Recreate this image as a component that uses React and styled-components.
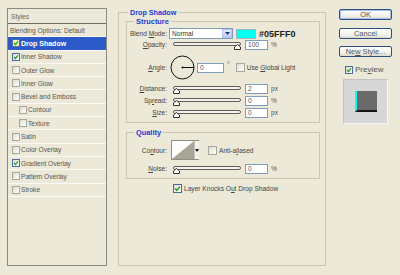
import React from 'react';
import styled, { createGlobalStyle } from 'styled-components';

const GlobalStyle = createGlobalStyle`
  html, body {
    margin: 0;
    padding: 0;
    background: #ece9d8;
  }
  body {
    font-family: "Liberation Sans", Arial, sans-serif;
    font-size: 6.6px;
    color: #333;
  }
`;

const Dialog = styled.div`
  width: 400px;
  height: 275px;
  box-sizing: border-box;
  padding: 8px 0 0 7px;
  display: flex;
  align-items: flex-start;
  background: #ece9d8;
  overflow: hidden;
`;

/* ---------- styles list ---------- */

const StylesPanel = styled.div`
  width: 100px;
  height: 258px;
  box-sizing: border-box;
  border: 1px solid #8d8b7f;
  display: flex;
  flex-direction: column;
`;

const PanelHeader = styled.div`
  height: 15px;
  box-sizing: border-box;
  padding-left: 3px;
  display: flex;
  align-items: center;
  color: #666;
  border-bottom: 1px solid #6f6d62;
`;

const StyleRow = styled.div`
  height: 13.3px;
  box-sizing: border-box;
  display: flex;
  align-items: center;
  padding-left: ${(p) => (p.$plain ? 2 : p.$indent ? 11 : 4)}px;
  border-bottom: 1px solid #fbfaf5;
  background: ${(p) => (p.$selected ? '#2c5bc9' : 'transparent')};
  color: ${(p) => (p.$selected ? '#fff' : '#555')};
  font-weight: ${(p) => (p.$selected ? 'bold' : 'normal')};
  font-size: ${(p) => (p.$selected ? '7px' : '6.6px')};
  white-space: nowrap;
`;

/* ---------- checkbox ---------- */

const Box = styled.span`
  flex: none;
  width: ${(p) => p.$size}px;
  height: ${(p) => p.$size}px;
  box-sizing: border-box;
  border: 1px solid ${(p) => (p.$checked ? '#4b6c9c' : '#a9a799')};
  background: ${(p) =>
    p.$hot ? '#f6efb4' : 'linear-gradient(135deg, #dedcd2, #ffffff)'};
  margin-right: ${(p) => p.$gap}px;
  display: flex;
  align-items: center;
  justify-content: center;
`;

function CheckBox({ checked, size = 8, gap = 1, hot }) {
  return (
    <Box $checked={checked} $size={size} $gap={gap} $hot={hot}>
      {checked && (
        <svg width={size - 2} height={size - 2} viewBox="0 0 6 6">
          <polyline points="1,3 2.4,4.6 5,1.4" fill="none" stroke="#21a121" strokeWidth="1.3" />
        </svg>
      )}
    </Box>
  );
}

/* ---------- group boxes ---------- */

const Group = styled.fieldset`
  margin: ${(p) => p.$mt || 0}px 0 0 ${(p) => p.$ml || 0}px;
  min-width: 0;
  border: 1px solid #c9c6b4;
  padding: ${(p) => p.$pad};
  height: ${(p) => (p.$h ? `${p.$h}px` : 'auto')};
  width: ${(p) => (p.$w ? `${p.$w}px` : 'auto')};
  box-sizing: border-box;
  display: flex;
  flex-direction: column;
`;

const Legend = styled.legend`
  margin-left: ${(p) => p.$ml}px;
  padding: 0 2px;
  line-height: 9px;
  font-weight: bold;
  font-size: ${(p) => p.$size}px;
  color: #1b3bd6;
`;

const FieldRow = styled.div`
  height: ${(p) => p.$h}px;
  margin-top: ${(p) => p.$mt}px;
  display: flex;
  align-items: center;
`;

const Label = styled.span`
  width: 40px;
  flex: none;
  text-align: right;
  margin-right: 2px;
  color: #444;
  white-space: nowrap;
`;

const U = styled.span`
  text-decoration: underline;
`;

const Select = styled.div`
  width: 64px;
  height: 11px;
  box-sizing: border-box;
  border: 1px solid #7f9db9;
  background: #fff;
  display: flex;
  align-items: center;
  justify-content: space-between;
  padding-left: 2px;
  color: #333;
`;

const SelectArrow = styled.span`
  width: 10px;
  height: 9px;
  box-sizing: border-box;
  border: 1px solid #b2c4ee;
  background: linear-gradient(#e3ebfd, #bccdf6);
  display: flex;
  align-items: center;
  justify-content: center;
`;

const Swatch = styled.span`
  width: 20px;
  height: 10px;
  margin-left: 3px;
  background: #05fff0;
  border: 1px solid #9bb;
  box-sizing: border-box;
`;

const HexText = styled.span`
  margin-left: 3px;
  font-size: 9px;
  font-weight: bold;
  color: #222;
`;

const SliderWrap = styled.div`
  position: relative;
  width: 68px;
  height: 11px;
  margin-left: ${(p) => p.$ml}px;
  flex: none;
`;

const Track = styled.div`
  margin-top: 3px;
  height: 4px;
  box-sizing: border-box;
  border: 1px solid #5e5d57;
  border-radius: 2px;
  background: #f1f0ea;
`;

const Thumb = styled.svg`
  position: absolute;
  top: 5px;
`;

function Slider({ value, max, ml = 4 }) {
  const left = Math.round((value / max) * 61);
  return (
    <SliderWrap $ml={ml}>
      <Track />
      <Thumb width="7" height="6" viewBox="0 0 7 6" style={{ left }}>
        <polygon points="3.5,0.5 6.5,3 6.5,5.5 0.5,5.5 0.5,3" fill="#fff" stroke="#333" strokeWidth="1" />
      </Thumb>
    </SliderWrap>
  );
}

const NumInput = styled.span`
  width: ${(p) => p.$w}px;
  height: 10px;
  box-sizing: border-box;
  margin-left: ${(p) => p.$ml}px;
  border: 1px solid #7f9db9;
  background: #fff;
  padding-left: 2px;
  display: flex;
  align-items: center;
  color: #555;
  flex: none;
`;

const Unit = styled.span`
  margin-left: 3px;
  color: #555;
  align-self: ${(p) => (p.$top ? 'flex-start' : 'center')};
  margin-top: ${(p) => (p.$top ? '6px' : '0')};
`;

const InlineCheck = styled.label`
  display: flex;
  align-items: center;
  margin-left: ${(p) => p.$ml}px;
  color: #444;
  white-space: nowrap;
`;

const AngleDial = styled.svg`
  margin-left: 1px;
  flex: none;
`;

const ContourBox = styled.div`
  margin-left: 2px;
  width: 28px;
  height: 20px;
  box-sizing: border-box;
  border: 1px solid #8f8d80;
  display: flex;
  background: #fff;
`;

const ContourPick = styled.span`
  flex: 1;
  border-right: 1px solid #c8c6ba;
`;

const ContourDrop = styled.span`
  width: 5px;
  display: flex;
  align-items: center;
  justify-content: center;
  background: #f3f2ec;
`;

const KnockRow = styled.div`
  margin-top: 5px;
  padding-left: 47px;
  display: flex;
  align-items: center;
  height: 9px;
  color: #444;
  white-space: nowrap;
`;

/* ---------- right column ---------- */

const Side = styled.div`
  margin-left: 13px;
  padding-top: 1px;
  width: 53px;
  display: flex;
  flex-direction: column;
`;

const Button = styled.div`
  height: 11px;
  margin-top: ${(p) => p.$mt}px;
  box-sizing: border-box;
  border: 1px solid #2d4f7e;
  border-radius: 2px;
  background: linear-gradient(#ffffff, #f0efe9 70%, #dcd8cc);
  box-shadow: ${(p) => (p.$default ? 'inset 0 0 0 1px #a9c0ea' : 'none')};
  display: flex;
  align-items: center;
  justify-content: center;
  font-size: 7.4px;
  color: #555;
  white-space: nowrap;
`;

const PreviewToggle = styled.div`
  margin-top: 8px;
  padding-left: 6px;
  display: flex;
  align-items: center;
  font-size: 8px;
  color: #555;
`;

const PreviewBox = styled.div`
  margin: 5px 0 0 4px;
  width: 45px;
  height: 45px;
  box-sizing: border-box;
  background: #d7d7d7;
  border: 1px solid;
  border-color: #c2c2c2 #f6f6f6 #f6f6f6 #c2c2c2;
  display: flex;
  align-items: center;
  justify-content: center;
`;

const PreviewSquare = styled.div`
  width: 22px;
  height: 21px;
  box-sizing: border-box;
  background: #6a6a6a;
  border-left: 2px solid #05fff0;
  border-bottom: 2px solid #141414;
`;

const styleItems = [
  { label: 'Drop Shadow', checked: true, selected: true },
  { label: 'Inner Shadow', checked: true },
  { label: 'Outer Glow' },
  { label: 'Inner Glow' },
  { label: 'Bevel and Emboss' },
  { label: 'Contour', indent: true },
  { label: 'Texture', indent: true },
  { label: 'Satin' },
  { label: 'Color Overlay' },
  { label: 'Gradient Overlay', checked: true },
  { label: 'Pattern Overlay' },
  { label: 'Stroke' },
];

export default function App() {
  return (
    <>
      <GlobalStyle />
      <Dialog>
        <StylesPanel>
          <PanelHeader>Styles</PanelHeader>
          <StyleRow $plain>Blending Options: Default</StyleRow>
          {styleItems.map((it) => (
            <StyleRow key={it.label} $indent={it.indent} $selected={it.selected}>
              <CheckBox checked={it.checked} hot={it.selected} />
              {it.label}
            </StyleRow>
          ))}
        </StylesPanel>

        <Group $pad="0 5px 0 7px" $h={258} $w={208} $ml={11}>
          <Legend $ml={2} $size={7.2}>Drop Shadow</Legend>

          <Group $pad="0 0 4px 0">
            <Legend $ml={7} $size={7.4}>Structure</Legend>
            <FieldRow $h={11} $mt={2}>
              <Label>Blend <U>M</U>ode:</Label>
              <Select>
                Normal
                <SelectArrow>
                  <svg width="5" height="3" viewBox="0 0 5 3">
                    <polygon points="0,0 5,0 2.5,3" fill="#1d3a7a" />
                  </svg>
                </SelectArrow>
              </Select>
              <Swatch />
              <HexText>#05FFF0</HexText>
            </FieldRow>
            <FieldRow $h={11} $mt={0}>
              <Label><U>O</U>pacity:</Label>
              <Slider value={100} max={100} />
              <NumInput $w={23} $ml={4}>100</NumInput>
              <Unit>%</Unit>
            </FieldRow>
            <FieldRow $h={25} $mt={5}>
              <Label><U>A</U>ngle:</Label>
              <AngleDial width="25" height="25" viewBox="0 0 25 25">
                <circle cx="12.5" cy="12.5" r="11.5" fill="none" stroke="#111" strokeWidth="1" />
                <line x1="12.5" y1="12.5" x2="24" y2="12.5" stroke="#111" strokeWidth="1" />
                <circle cx="12.5" cy="12.5" r="1" fill="#111" />
              </AngleDial>
              <NumInput $w={27} $ml={2}>0</NumInput>
              <Unit $top>°</Unit>
              <InlineCheck $ml={6}>
                <CheckBox size={9} gap={2} />
                <span>Use <U>G</U>lobal Light</span>
              </InlineCheck>
            </FieldRow>
            <FieldRow $h={11} $mt={3}>
              <Label><U>D</U>istance:</Label>
              <Slider value={2} max={250} />
              <NumInput $w={23} $ml={4}>2</NumInput>
              <Unit>px</Unit>
            </FieldRow>
            <FieldRow $h={11} $mt={1}>
              <Label>Sp<U>r</U>ead:</Label>
              <Slider value={0} max={100} />
              <NumInput $w={23} $ml={4}>0</NumInput>
              <Unit>%</Unit>
            </FieldRow>
            <FieldRow $h={11} $mt={1}>
              <Label><U>S</U>ize:</Label>
              <Slider value={0} max={250} />
              <NumInput $w={23} $ml={4}>0</NumInput>
              <Unit>px</Unit>
            </FieldRow>
          </Group>

          <Group $pad="0 0 4px 0" $mt={5}>
            <Legend $ml={7} $size={7.4}>Quality</Legend>
            <FieldRow $h={20} $mt={3}>
              <Label>Co<U>n</U>tour:</Label>
              <ContourBox>
                <ContourPick>
                  <svg width="22" height="18" viewBox="0 0 22 18">
                    <polygon points="0,18 22,0 22,18" fill="#a8a597" />
                  </svg>
                </ContourPick>
                <ContourDrop>
                  <svg width="4" height="3" viewBox="0 0 4 3">
                    <polygon points="0,0 4,0 2,3" fill="#111" />
                  </svg>
                </ContourDrop>
              </ContourBox>
              <InlineCheck $ml={9}>
                <CheckBox size={9} gap={2} />
                <span>Anti-a<U>l</U>iased</span>
              </InlineCheck>
            </FieldRow>
            <FieldRow $h={11} $mt={3}>
              <Label><U>N</U>oise:</Label>
              <Slider value={0} max={100} />
              <NumInput $w={23} $ml={4}>0</NumInput>
              <Unit>%</Unit>
            </FieldRow>
          </Group>

          <KnockRow>
            <CheckBox checked size={9} gap={2} />
            <span>Layer Knocks O<U>u</U>t Drop Shadow</span>
          </KnockRow>
        </Group>

        <Side>
          <Button $mt={0} $default>OK</Button>
          <Button $mt={8}>Cancel</Button>
          <Button $mt={7}><span>Ne<U>w</U> Style...</span></Button>
          <PreviewToggle>
            <CheckBox checked size={8} gap={2} />
            <span>Pre<U>v</U>iew</span>
          </PreviewToggle>
          <PreviewBox>
            <PreviewSquare />
          </PreviewBox>
        </Side>
      </Dialog>
    </>
  );
}
